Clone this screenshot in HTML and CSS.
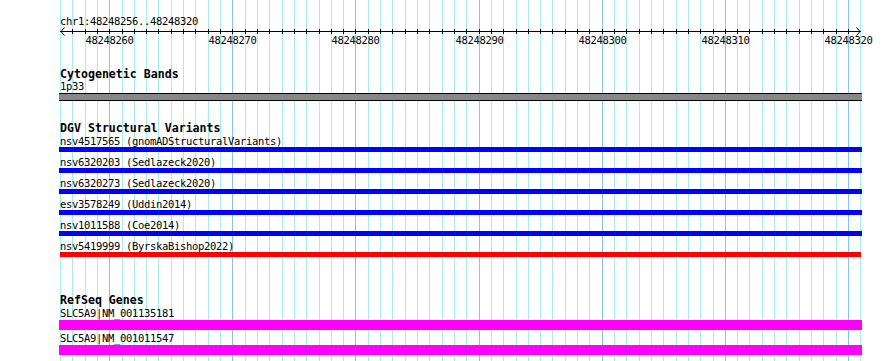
FILE: index.html
```html
<!DOCTYPE html>
<html>
<head>
<meta charset="utf-8">
<link rel="stylesheet" href="styles.css">
</head>
<body>
<div class="page">
  <svg class="grid" width="890" height="361" viewBox="0 0 890 361" shape-rendering="crispEdges">
    <g class="minor">
      <rect x="60" y="0" width="1" height="361"/><rect x="72" y="0" width="1" height="361"/><rect x="85" y="0" width="1" height="361"/><rect x="97" y="0" width="1" height="361"/>
      <rect x="122" y="0" width="1" height="361"/><rect x="134" y="0" width="1" height="361"/><rect x="146" y="0" width="1" height="361"/><rect x="158" y="0" width="1" height="361"/><rect x="171" y="0" width="1" height="361"/><rect x="183" y="0" width="1" height="361"/><rect x="195" y="0" width="1" height="361"/><rect x="208" y="0" width="1" height="361"/><rect x="220" y="0" width="1" height="361"/>
      <rect x="245" y="0" width="1" height="361"/><rect x="257" y="0" width="1" height="361"/><rect x="269" y="0" width="1" height="361"/><rect x="282" y="0" width="1" height="361"/><rect x="294" y="0" width="1" height="361"/><rect x="306" y="0" width="1" height="361"/><rect x="319" y="0" width="1" height="361"/><rect x="331" y="0" width="1" height="361"/><rect x="343" y="0" width="1" height="361"/>
      <rect x="368" y="0" width="1" height="361"/><rect x="380" y="0" width="1" height="361"/><rect x="392" y="0" width="1" height="361"/><rect x="405" y="0" width="1" height="361"/><rect x="417" y="0" width="1" height="361"/><rect x="429" y="0" width="1" height="361"/><rect x="442" y="0" width="1" height="361"/><rect x="454" y="0" width="1" height="361"/><rect x="466" y="0" width="1" height="361"/>
      <rect x="491" y="0" width="1" height="361"/><rect x="503" y="0" width="1" height="361"/><rect x="516" y="0" width="1" height="361"/><rect x="528" y="0" width="1" height="361"/><rect x="540" y="0" width="1" height="361"/><rect x="552" y="0" width="1" height="361"/><rect x="565" y="0" width="1" height="361"/><rect x="577" y="0" width="1" height="361"/><rect x="589" y="0" width="1" height="361"/>
      <rect x="614" y="0" width="1" height="361"/><rect x="626" y="0" width="1" height="361"/><rect x="639" y="0" width="1" height="361"/><rect x="651" y="0" width="1" height="361"/><rect x="663" y="0" width="1" height="361"/><rect x="676" y="0" width="1" height="361"/><rect x="688" y="0" width="1" height="361"/><rect x="700" y="0" width="1" height="361"/><rect x="713" y="0" width="1" height="361"/>
      <rect x="737" y="0" width="1" height="361"/><rect x="749" y="0" width="1" height="361"/><rect x="762" y="0" width="1" height="361"/><rect x="774" y="0" width="1" height="361"/><rect x="786" y="0" width="1" height="361"/><rect x="799" y="0" width="1" height="361"/><rect x="811" y="0" width="1" height="361"/><rect x="823" y="0" width="1" height="361"/><rect x="836" y="0" width="1" height="361"/>
      <rect x="860" y="0" width="1" height="361"/>
    </g>
    <g class="major">
      <rect x="109" y="0" width="1" height="361"/><rect x="232" y="0" width="1" height="361"/><rect x="355" y="0" width="1" height="361"/><rect x="479" y="0" width="1" height="361"/><rect x="602" y="0" width="1" height="361"/><rect x="725" y="0" width="1" height="361"/><rect x="848" y="0" width="1" height="361"/>
    </g>
  </svg>

  <div class="content">
    <div class="ruler-title">chr1:48248256..48248320</div>
    <svg class="axis" width="890" height="20" viewBox="0 27 890 20" shape-rendering="crispEdges">
      <rect class="ink" x="60" y="31" width="801" height="1"/>
      <path class="arrow" d="M64.5 27.5 L61 31.5 L64.5 35.5" shape-rendering="auto"/>
      <path class="arrow" d="M856.5 27.5 L860 31.5 L856.5 35.5" shape-rendering="auto"/>
      <g class="ink">
        <rect x="72" y="29" width="1" height="5"/><rect x="85" y="29" width="1" height="5"/><rect x="97" y="29" width="1" height="5"/><rect x="109" y="29" width="1" height="5"/>
        <rect x="122" y="29" width="1" height="5"/><rect x="134" y="29" width="1" height="5"/><rect x="146" y="29" width="1" height="5"/><rect x="158" y="29" width="1" height="5"/><rect x="171" y="29" width="1" height="5"/><rect x="183" y="29" width="1" height="5"/><rect x="195" y="29" width="1" height="5"/><rect x="208" y="29" width="1" height="5"/><rect x="220" y="29" width="1" height="5"/><rect x="232" y="29" width="1" height="5"/>
        <rect x="245" y="29" width="1" height="5"/><rect x="257" y="29" width="1" height="5"/><rect x="269" y="29" width="1" height="5"/><rect x="282" y="29" width="1" height="5"/><rect x="294" y="29" width="1" height="5"/><rect x="306" y="29" width="1" height="5"/><rect x="319" y="29" width="1" height="5"/><rect x="331" y="29" width="1" height="5"/><rect x="343" y="29" width="1" height="5"/><rect x="355" y="29" width="1" height="5"/>
        <rect x="368" y="29" width="1" height="5"/><rect x="380" y="29" width="1" height="5"/><rect x="392" y="29" width="1" height="5"/><rect x="405" y="29" width="1" height="5"/><rect x="417" y="29" width="1" height="5"/><rect x="429" y="29" width="1" height="5"/><rect x="442" y="29" width="1" height="5"/><rect x="454" y="29" width="1" height="5"/><rect x="466" y="29" width="1" height="5"/><rect x="479" y="29" width="1" height="5"/>
        <rect x="491" y="29" width="1" height="5"/><rect x="503" y="29" width="1" height="5"/><rect x="516" y="29" width="1" height="5"/><rect x="528" y="29" width="1" height="5"/><rect x="540" y="29" width="1" height="5"/><rect x="552" y="29" width="1" height="5"/><rect x="565" y="29" width="1" height="5"/><rect x="577" y="29" width="1" height="5"/><rect x="589" y="29" width="1" height="5"/><rect x="602" y="29" width="1" height="5"/>
        <rect x="614" y="29" width="1" height="5"/><rect x="626" y="29" width="1" height="5"/><rect x="639" y="29" width="1" height="5"/><rect x="651" y="29" width="1" height="5"/><rect x="663" y="29" width="1" height="5"/><rect x="676" y="29" width="1" height="5"/><rect x="688" y="29" width="1" height="5"/><rect x="700" y="29" width="1" height="5"/><rect x="713" y="29" width="1" height="5"/><rect x="725" y="29" width="1" height="5"/>
        <rect x="737" y="29" width="1" height="5"/><rect x="749" y="29" width="1" height="5"/><rect x="762" y="29" width="1" height="5"/><rect x="774" y="29" width="1" height="5"/><rect x="786" y="29" width="1" height="5"/><rect x="799" y="29" width="1" height="5"/><rect x="811" y="29" width="1" height="5"/><rect x="823" y="29" width="1" height="5"/><rect x="836" y="29" width="1" height="5"/><rect x="848" y="29" width="1" height="5"/>
      </g>
      <g class="tick-labels">
        <text x="109.5" y="44">48248260</text>
        <text x="232.5" y="44">48248270</text>
        <text x="355.5" y="44">48248280</text>
        <text x="479.5" y="44">48248290</text>
        <text x="602.5" y="44">48248300</text>
        <text x="725.5" y="44">48248310</text>
        <text x="848.5" y="44">48248320</text>
      </g>
    </svg>

    <section class="track track-cyto">
      <div class="track-title">Cytogenetic Bands</div>
      <div class="label label-first">1p33</div>
      <div class="bar bar-band"></div>
    </section>

    <section class="track track-dgv">
      <div class="track-title">DGV Structural Variants</div>
      <div class="label label-first">nsv4517565 (gnomADStructuralVariants)</div>
      <div class="bar bar-blue"></div>
      <div class="label">nsv6320203 (Sedlazeck2020)</div>
      <div class="bar bar-blue"></div>
      <div class="label">nsv6320273 (Sedlazeck2020)</div>
      <div class="bar bar-blue"></div>
      <div class="label">esv3578249 (Uddin2014)</div>
      <div class="bar bar-blue"></div>
      <div class="label">nsv1011588 (Coe2014)</div>
      <div class="bar bar-blue"></div>
      <div class="label">nsv5419999 (ByrskaBishop2022)</div>
      <div class="bar bar-red"></div>
    </section>

    <section class="track track-refseq">
      <div class="track-title">RefSeq Genes</div>
      <div class="label label-first">SLC5A9|NM_001135181</div>
      <div class="bar bar-gene"></div>
      <div class="label">SLC5A9|NM_001011547</div>
      <div class="bar bar-gene"></div>
    </section>
  </div>
</div>
</body>
</html>
```

FILE: styles.css
```css
html, body {
  margin: 0;
  padding: 0;
  background: #ffffff;
}

.page {
  position: relative;
  width: 890px;
  height: 361px;
  overflow: hidden;
  font-family: "DejaVu Sans Mono", "Liberation Mono", monospace;
  font-size: 10.5px;
  letter-spacing: -0.32px;
  color: #000;
}

.grid {
  position: absolute;
  left: 0;
  top: 0;
  z-index: 0;
}

.grid .minor rect { fill: #a8ecf0; }
.grid .major rect { fill: #86c6ea; }

.content {
  position: relative;
  z-index: 1;
  padding-left: 60px;
}

.ruler-title {
  padding-top: 16px;
  line-height: 11px;
  height: 11px;
  white-space: pre;
}

.axis {
  display: block;
  margin-left: -60px;
}

.axis .ink, .axis .ink rect { fill: #000; }

.axis .arrow {
  fill: none;
  stroke: #000;
  stroke-width: 1;
}

.tick-labels text {
  font-family: "DejaVu Sans Mono", "Liberation Mono", monospace;
  font-size: 10.5px;
  letter-spacing: -0.32px;
  text-anchor: middle;
  fill: #000;
}

.track-title {
  font-weight: bold;
  font-size: 11.6px;
  letter-spacing: 0;
  line-height: 12px;
  height: 12px;
  white-space: pre;
}

.track-cyto { margin-top: 21px; }
.track-dgv { margin-top: 21px; }
.track-refseq { margin-top: 37px; }

.label {
  position: relative;
  z-index: 1;
  line-height: 11px;
  height: 11px;
  margin-top: 5px;
  white-space: pre;
}

.track-cyto .label-first { margin-top: 1px; }
.track-dgv .label-first { margin-top: 2px; }
.track-refseq .label { margin-top: 3px; }
.track-refseq .label-first { margin-top: 2px; }

.bar {
  margin-left: -1px;
  width: 803px;
}

.bar-band {
  margin-top: 1px;
  height: 6px;
  background: #888888;
  border-top: 1px solid #000;
  border-bottom: 1px solid #000;
}

.bar-blue {
  height: 5px;
  background: #0000ff;
}

.bar-red {
  height: 5px;
  margin-left: 0;
  width: 801px;
  background: #ff0000;
}

.bar-gene {
  margin-top: 1px;
  height: 10px;
  background: #ff00ff;
}
```
